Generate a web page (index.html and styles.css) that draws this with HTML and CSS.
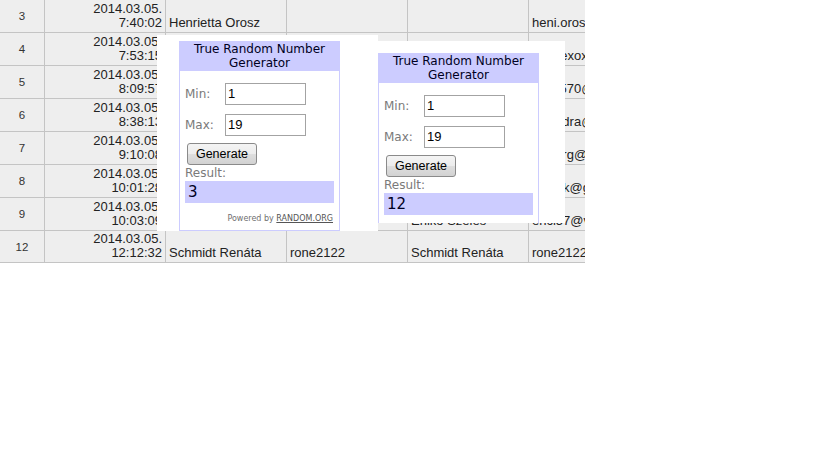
FILE: index.html
```html
<!DOCTYPE html>
<html>
<head>
<meta charset="utf-8">
<link rel="stylesheet" href="styles.css">
</head>
<body>
<div class="sheet">
  <div class="row">
    <div class="c num">3</div>
    <div class="c ts"><span>2014.03.05.</span><span>7:40:02</span></div>
    <div class="c">Henrietta Orosz</div>
    <div class="c"></div>
    <div class="c"></div>
    <div class="c last">heni.orosz@gmail.com</div>
  </div>
  <div class="row">
    <div class="c num">4</div>
    <div class="c ts"><span>2014.03.05.</span><span>7:53:15</span></div>
    <div class="c">Kovács Betti</div>
    <div class="c">betty</div>
    <div class="c">Kovács Betti</div>
    <div class="c last">bettyexox@gmail.com</div>
  </div>
  <div class="row">
    <div class="c num">5</div>
    <div class="c ts"><span>2014.03.05.</span><span>8:09:57</span></div>
    <div class="c">Nagy Katalin</div>
    <div class="c">katai570</div>
    <div class="c">Nagy Katalin</div>
    <div class="c last">katai570@freemail.hu</div>
  </div>
  <div class="row">
    <div class="c num">6</div>
    <div class="c ts"><span>2014.03.05.</span><span>8:38:13</span></div>
    <div class="c">Tóth Alexandra</div>
    <div class="c">kisandra</div>
    <div class="c">Tóth Alexandra</div>
    <div class="c last">kisandra@citromail.hu</div>
  </div>
  <div class="row">
    <div class="c num">7</div>
    <div class="c ts"><span>2014.03.05.</span><span>9:10:08</span></div>
    <div class="c">Szabó Tamás</div>
    <div class="c">sziborg</div>
    <div class="c">Szabó Tamás</div>
    <div class="c last">sziborg@gmail.com</div>
  </div>
  <div class="row">
    <div class="c num">8</div>
    <div class="c ts"><span>2014.03.05.</span><span>10:01:28</span></div>
    <div class="c">Balázs Kinga</div>
    <div class="c">balask</div>
    <div class="c">Balázs Kinga</div>
    <div class="c last">balask@gmail.com</div>
  </div>
  <div class="row">
    <div class="c num">9</div>
    <div class="c ts"><span>2014.03.05.</span><span>10:03:09</span></div>
    <div class="c">Enikő Szeles</div>
    <div class="c">enci57</div>
    <div class="c">Enikő Szeles</div>
    <div class="c last">enci57@vipmail.hu</div>
  </div>
  <div class="row short">
    <div class="c num">12</div>
    <div class="c ts"><span>2014.03.05.</span><span>12:12:32</span></div>
    <div class="c">Schmidt Renáta</div>
    <div class="c">rone2122</div>
    <div class="c">Schmidt Renáta</div>
    <div class="c last">rone2122@gmail.com</div>
  </div>
</div>

<div class="frame frame-one">
  <div class="rng">
    <div class="rng-head">True Random Number<br>Generator</div>
    <div class="rng-row first"><span class="lbl">Min:</span><span class="inp">1</span></div>
    <div class="rng-row"><span class="lbl">Max:</span><span class="inp">19</span></div>
    <div class="btn-row"><span class="btn">Generate</span></div>
    <div class="res-lbl">Result:</div>
    <div class="res">3</div>
    <div class="powered">Powered by <u>RANDOM.ORG</u></div>
  </div>
</div>

<div class="frame frame-two">
  <div class="rng">
    <div class="rng-head">True Random Number<br>Generator</div>
    <div class="rng-row first"><span class="lbl">Min:</span><span class="inp">1</span></div>
    <div class="rng-row"><span class="lbl">Max:</span><span class="inp">19</span></div>
    <div class="btn-row"><span class="btn">Generate</span></div>
    <div class="res-lbl">Result:</div>
    <div class="res">12</div>
    <div class="powered">Powered by <u>RANDOM.ORG</u></div>
  </div>
</div>
</body>
</html>
```
FILE: styles.css
```css
html, body {
  margin: 0;
  padding: 0;
  background: #ffffff;
}
body {
  width: 819px;
  height: 460px;
  position: relative;
  overflow: hidden;
  font-family: "Liberation Sans", Arial, sans-serif;
}
.sheet {
  width: 585px;
  overflow: hidden;
}
.row {
  display: flex;
  height: 33px;
  box-sizing: border-box;
  border-bottom: 1px solid #c4c4c4;
  background: #eeeeee;
}
.row.short {
  height: 32px;
}
.c {
  flex: 0 0 121px;
  box-sizing: border-box;
  border-right: 1px solid #c4c4c4;
  padding: 0 3px 2px 3px;
  display: flex;
  flex-direction: column;
  justify-content: flex-end;
  font-size: 13px;
  line-height: 14px;
  color: #222222;
  white-space: nowrap;
  overflow: hidden;
}
.c.num {
  flex: 0 0 45px;
  justify-content: center;
  align-items: center;
  padding: 0;
  font-size: 11.5px;
  color: #333333;
}
.c.ts {
  align-items: flex-end;
  text-align: right;
}
.c.last {
  flex: 1 1 auto;
  border-right: none;
}

.frame {
  position: absolute;
  background: #ffffff;
  overflow: hidden;
}
.frame-one {
  left: 157px;
  top: 35px;
  width: 221px;
  height: 196px;
  padding: 6px 0 0 22px;
  box-sizing: border-box;
}
.frame-two {
  left: 377px;
  top: 41px;
  width: 188px;
  height: 182px;
  padding: 12px 0 0 1px;
  box-sizing: border-box;
}
.rng {
  width: 161px;
  box-sizing: border-box;
  border: 1px solid #ccccff;
  border-top: none;
  background: #ffffff;
  font-family: "DejaVu Sans", Verdana, sans-serif;
  padding-bottom: 6px;
}
.rng-head {
  background: #ccccff;
  text-align: center;
  font-size: 12px;
  line-height: 14px;
  padding: 1px 0 1px;
  margin: 0 -1px;
  color: #000022;
}
.rng-row {
  display: flex;
  align-items: center;
  margin-top: 9px;
  padding-left: 5px;
}
.rng-row.first {
  margin-top: 12px;
}
.lbl {
  width: 40px;
  font-size: 12px;
  color: #7a7a7a;
}
.inp {
  width: 81px;
  height: 22px;
  box-sizing: border-box;
  border: 1px solid #a3a3a3;
  font-family: "Liberation Sans", Arial, sans-serif;
  font-size: 13px;
  line-height: 20px;
  padding-left: 2px;
  color: #000000;
}
.btn-row {
  margin-top: 7px;
  padding-left: 7px;
  display: flex;
}
.btn {
  width: 70px;
  height: 22px;
  box-sizing: border-box;
  border: 1px solid #8a8a8a;
  border-radius: 3px;
  background: linear-gradient(#f4f4f4 0%, #ececec 50%, #dedede 50%, #d2d2d2 100%);
  font-family: "Liberation Sans", Arial, sans-serif;
  font-size: 12.5px;
  line-height: 20px;
  text-align: center;
  color: #000000;
}
.res-lbl {
  font-size: 12px;
  line-height: 16px;
  color: #7a7a7a;
  padding-left: 5px;
}
.res {
  margin: 0 5px;
  height: 22px;
  background: #ccccff;
  font-size: 15px;
  line-height: 22px;
  padding-left: 3px;
  color: #000022;
}
.powered {
  margin-top: 11px;
  text-align: right;
  padding-right: 6px;
  font-size: 8px;
  line-height: 10px;
  color: #707070;
}
.powered u {
  color: #555555;
}
```
